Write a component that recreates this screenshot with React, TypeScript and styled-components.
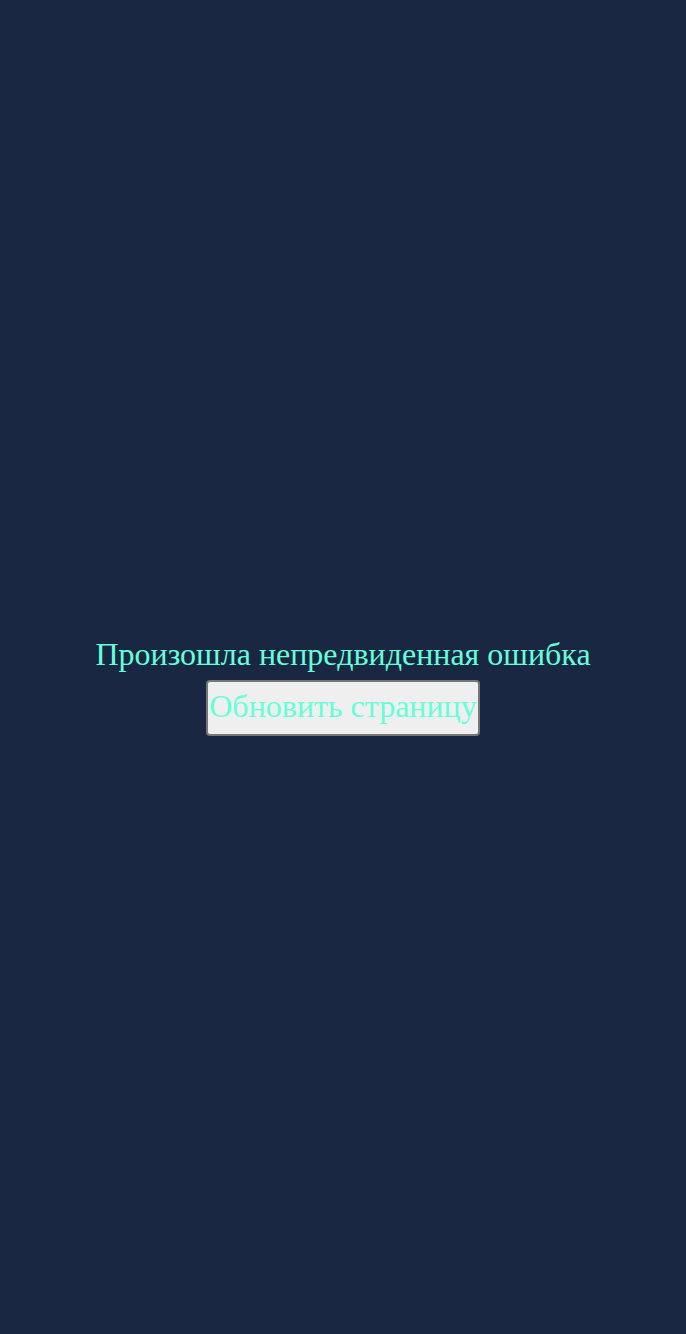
import React from "react";
import styled, { createGlobalStyle } from "styled-components";

const Global = createGlobalStyle`
  html, body {
    margin: 0;
    padding: 0;
    background: #1a2742;
  }
`;

const Screen = styled.div`
  box-sizing: border-box;
  min-height: 100vh;
  padding-top: 37px;
  display: flex;
  flex-direction: column;
  align-items: center;
  justify-content: center;
  font-family: "Liberation Serif", "Times New Roman", serif;
  color: #64ffda;
`;

const Message = styled.div`
  font-size: 32px;
  line-height: normal;
`;

const ReloadButton = styled.button`
  margin-top: 7px;
  padding: 6px 1px 9px;
  font-family: "Liberation Serif", "Times New Roman", serif;
  font-size: 32px;
  line-height: normal;
  color: #64ffda;
  background: #efefef;
  border: 2px solid #767676;
  border-radius: 4px;
  cursor: pointer;
`;

export default function App() {
  return (
    <>
      <Global />
      <Screen>
        <Message>Произошла непредвиденная ошибка</Message>
        <ReloadButton onClick={() => window.location.reload()}>Обновить страницу</ReloadButton>
      </Screen>
    </>
  );
}
